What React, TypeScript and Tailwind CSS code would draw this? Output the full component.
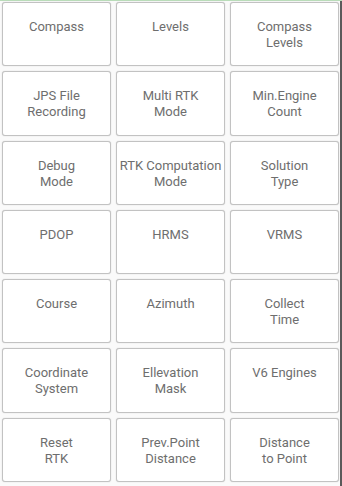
import React from "react";

const items: string[][] = [
  ["Compass"],
  ["Levels"],
  ["Compass", "Levels"],
  ["JPS File", "Recording"],
  ["Multi RTK", "Mode"],
  ["Min.Engine", "Count"],
  ["Debug", "Mode"],
  ["RTK Computation", "Mode"],
  ["Solution", "Type"],
  ["PDOP"],
  ["HRMS"],
  ["VRMS"],
  ["Course"],
  ["Azimuth"],
  ["Collect", "Time"],
  ["Coordinate", "System"],
  ["Ellevation", "Mask"],
  ["V6 Engines"],
  ["Reset", "RTK"],
  ["Prev.Point", "Distance"],
  ["Distance", "to Point"],
];

export default function App() {
  return (
    <div
      className="relative w-[342px] h-[486px] bg-[#fafafa] overflow-hidden"
      style={{ fontFamily: "Roboto, 'Liberation Sans', sans-serif" }}
    >
      <div className="h-px bg-[#b9dcb9]" />
      <div className="flex">
        <div className="grid grid-cols-3 grid-rows-7 gap-x-[5px] gap-y-[5px] w-[339px] h-[481px] pl-[2px] pt-px">
          {items.map((lines, i) => (
            <div
              key={i}
              className="border border-[#c2c2c2] rounded-[3px] bg-white shadow-[0_0_1px_rgba(0,0,0,0.25)] flex flex-col items-center pt-[16px] text-[13px] leading-[16px] text-[#6e6e6e] whitespace-nowrap"
            >
              {lines.map((l, j) => (
                <span key={j}>{l}</span>
              ))}
            </div>
          ))}
        </div>
        <div className="ml-[1px] w-[2px] h-[486px] bg-[#5a5a5a]" />
      </div>
    </div>
  );
}
